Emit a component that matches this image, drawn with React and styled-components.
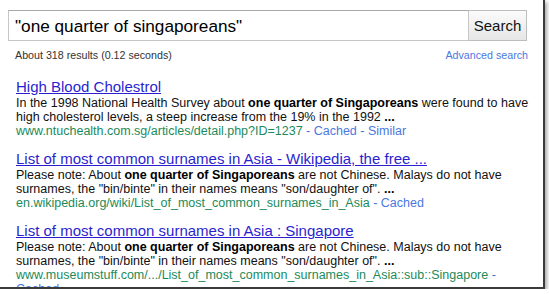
import React from 'react';
import styled, { createGlobalStyle } from 'styled-components';

const GlobalStyle = createGlobalStyle`
  html, body {
    margin: 0;
    padding: 0;
    background: #fff;
  }
  body {
    font-family: "Liberation Sans", Arial, sans-serif;
  }
`;

const results = [
  {
    title: 'High Blood Cholestrol',
    lines: [
      <>In the 1998 National Health Survey about <b>one quarter of Singaporeans</b> were found to have</>,
      <>high cholesterol levels, a steep increase from the 19% in the 1992 <b>...</b></>,
    ],
    url: 'www.ntuchealth.com.sg/articles/detail.php?ID=1237',
    links: ['Cached', 'Similar'],
  },
  {
    title: 'List of most common surnames in Asia - Wikipedia, the free ...',
    lines: [
      <>Please note: About <b>one quarter of Singaporeans</b> are not Chinese. Malays do not have</>,
      <>surnames, the "bin/binte" in their names means "son/daughter of". <b>...</b></>,
    ],
    url: 'en.wikipedia.org/wiki/List_of_most_common_surnames_in_Asia',
    links: ['Cached'],
  },
  {
    title: 'List of most common surnames in Asia : Singapore',
    lines: [
      <>Please note: About <b>one quarter of Singaporeans</b> are not Chinese. Malays do not have</>,
      <>surnames, the "bin/binte" in their names means "son/daughter of". <b>...</b></>,
    ],
    url: 'www.museumstuff.com/.../List_of_most_common_surnames_in_Asia::sub::Singapore',
    links: [],
    trailing: ' -',
    overflow: 'Cached',
  },
];

const App = () => (
  <>
    <GlobalStyle />
    <Frame>
      <SearchRow>
        <QueryBox>"one quarter of singaporeans"</QueryBox>
        <SearchButton>Search</SearchButton>
      </SearchRow>
      <MetaRow>
        <span>About 318 results (0.12 seconds)</span>
        <SmallLink>Advanced search</SmallLink>
      </MetaRow>
      <ResultList>
        {results.map((r) => (
          <Result key={r.url}>
            <Title>{r.title}</Title>
            {r.lines.map((l, i) => (
              <Snippet key={i}>{l}</Snippet>
            ))}
            <UrlLine>
              <Url>{r.url}</Url>
              {r.links.map((l) => (
                <React.Fragment key={l}>
                  <Sep> - </Sep>
                  <SmallLink>{l}</SmallLink>
                </React.Fragment>
              ))}
              {r.trailing && <Sep>{r.trailing}</Sep>}
            </UrlLine>
            {r.overflow && <UrlLine><SmallLink>{r.overflow}</SmallLink></UrlLine>}
          </Result>
        ))}
      </ResultList>
    </Frame>
  </>
);

const Frame = styled.div`
  width: 543px;
  height: 287px;
  overflow: hidden;
  border-right: 2px solid #3a3a3a;
  border-bottom: 2px solid #3a3a3a;
  box-shadow: 2px 2px 4px rgba(0, 0, 0, 0.35);
  background: #fff;
`;

const SearchRow = styled.div`
  display: flex;
  padding: 10px 0 0 8px;
  height: 31px;
`;

const QueryBox = styled.div`
  box-sizing: border-box;
  width: 461px;
  height: 31px;
  border: 1px solid #c6c6c6;
  border-top-color: #a8a8a8;
  padding: 5px 0 0 6px;
  font-size: 17.2px;
  color: #000;
  white-space: nowrap;
`;

const SearchButton = styled.div`
  box-sizing: border-box;
  width: 58px;
  height: 31px;
  border: 1px solid #bdbdbd;
  border-left: none;
  background: linear-gradient(#fbfbfb, #e6e6e6);
  font-size: 15px;
  color: #111;
  display: flex;
  align-items: center;
  justify-content: center;
  padding-bottom: 1px;
`;

const MetaRow = styled.div`
  display: flex;
  justify-content: space-between;
  width: 513px;
  padding: 8px 0 0 15px;
  font-size: 10.7px;
  color: #333;
`;

const ResultList = styled.div`
  padding: 17px 0 0 16px;
`;

const Result = styled.div`
  margin-bottom: 12px;
`;

const Title = styled.div`
  font-size: 15px;
  line-height: 18px;
  color: #2a1fd0;
  text-decoration: underline;
  white-space: nowrap;
`;

const Snippet = styled.div`
  font-size: 12.5px;
  line-height: 14px;
  color: #111;
  white-space: nowrap;

  b {
    color: #000;
  }
`;

const UrlLine = styled.div`
  font-size: 12.5px;
  line-height: 14px;
  white-space: nowrap;
`;

const Url = styled.span`
  color: #1c8a5a;
`;

const Sep = styled.span`
  color: #4272db;
`;

const SmallLink = styled.span`
  color: #4b78e0;
`;

export default App;
